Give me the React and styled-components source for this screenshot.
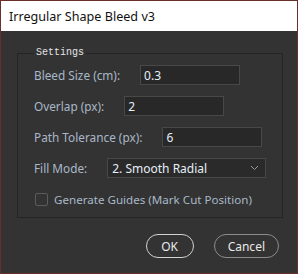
import styled, { createGlobalStyle } from "styled-components"

const GlobalStyle = createGlobalStyle`
  html, body {
    margin: 0;
    padding: 0;
    background: #333333;
  }
  * {
    box-sizing: border-box;
  }
`

const App = () => {
    return (
        <>
        <GlobalStyle />
        <Window>
            <TitleBar>Irregular Shape Bleed v3</TitleBar>
            <Body>
                <Group>
                    <Legend>Settings</Legend>
                    <Row>
                        <Label>Bleed Size (cm):</Label>
                        <TextInput defaultValue="0.3" />
                    </Row>
                    <Row>
                        <Label>Overlap (px):</Label>
                        <TextInput defaultValue="2" />
                    </Row>
                    <Row>
                        <Label>Path Tolerance (px):</Label>
                        <TextInput defaultValue="6" />
                    </Row>
                    <Row>
                        <Label>Fill Mode:</Label>
                        <Select>
                            <span>2. Smooth Radial</span>
                            <svg width="9" height="6" viewBox="0 0 9 6">
                                <polyline points="1,1 4.5,4.5 8,1" fill="none" stroke="#9a9a9a" strokeWidth="1" />
                            </svg>
                        </Select>
                    </Row>
                    <Row>
                        <CheckLabel>
                            <Box />
                            Generate Guides (Mark Cut Position)
                        </CheckLabel>
                    </Row>
                </Group>
                <Buttons>
                    <Button $primary>OK</Button>
                    <Button>Cancel</Button>
                </Buttons>
            </Body>
        </Window>
        </>
    )
}

export default App


const Window = styled.div`
width: 298px;
height: 274px;
border: 1px solid #6b2f2b;
background: #333333;
display: flex;
flex-direction: column;
`

const TitleBar = styled.div`
height: 30px;
background: #ffffff;
color: #111111;
font-family: "Noto Sans", sans-serif;
font-size: 12.6px;
padding-left: 8px;
padding-top: 1px;
display: flex;
align-items: center;
`

const Body = styled.div`
flex: 1;
padding: 16px 14px 0 16px;
`

const Group = styled.fieldset`
margin: 0;
border: 1px solid #242424;
padding: 6px 16px 8px 16px;
display: flex;
flex-direction: column;
gap: 11px;
`

const Legend = styled.legend`
padding: 0 2px;
font-family: "Liberation Mono", monospace;
font-size: 10px;
line-height: 12px;
color: #e4e4e4;
`

const Row = styled.div`
display: flex;
align-items: center;
height: 20px;
gap: 20px;
`

const Label = styled.span`
font-family: "Noto Sans", sans-serif;
font-size: 11.8px;
color: #a9b8c8;
white-space: nowrap;
`

const TextInput = styled.input`
width: 100px;
height: 20px;
background: #282828;
border: 1px solid #484848;
color: #e6eef7;
font-family: "Noto Sans", sans-serif;
font-size: 12px;
padding: 0 3px;
outline: none;
`

const Select = styled.div`
width: 159px;
height: 20px;
background: #2a2a2a;
border: 1px solid #484848;
color: #e6eef7;
font-family: "Noto Sans", sans-serif;
font-size: 12px;
padding: 0 6px 0 4px;
display: flex;
align-items: center;
justify-content: space-between;
`

const CheckLabel = styled.label`
display: flex;
align-items: center;
gap: 6px;
font-family: "Noto Sans", sans-serif;
font-size: 11.6px;
color: #a9b8c8;
white-space: nowrap;
`

const Box = styled.span`
width: 13px;
height: 13px;
border: 1px solid #5c5c5c;
border-radius: 2px;
margin-left: 1px;
`

const Buttons = styled.div`
display: flex;
justify-content: flex-end;
gap: 20px;
margin-top: 16px;
padding-right: 4px;
`

const Button = styled.button`
height: 24px;
min-width: 48px;
padding: 0 13px;
border-radius: 12px;
background: transparent;
border: 1px solid ${props => props.$primary ? "#d2d2d2" : "#8c8c8c"};
color: #e8e8e8;
font-family: "Noto Sans", sans-serif;
font-size: 12px;
`
